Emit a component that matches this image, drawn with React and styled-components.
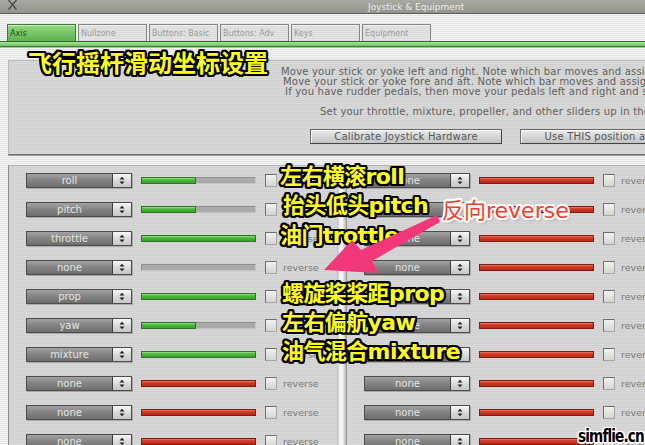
import React from "react";
import styled, { createGlobalStyle, css } from "styled-components";

const GlobalStyle = createGlobalStyle`
  html, body {
    margin: 0;
    padding: 0;
    overflow: hidden;
  }
  body {
    font-family: "DejaVu Sans", "Liberation Sans", sans-serif;
  }
`;

const Screen = styled.div`
  position: relative;
  width: 645px;
  height: 445px;
  overflow: hidden;
  background: repeating-linear-gradient(to bottom, #f4f4f4 0 1px, #e4e4e4 1px 2px);
`;

const TitleBar = styled.div`
  height: 13px;
  display: flex;
  align-items: center;
  background: linear-gradient(#aaaaa4, #93938d);
  border-bottom: 1px solid #5c5c58;
`;

const CloseMark = styled.svg`
  margin-left: 8px;
  width: 9px;
  height: 10px;
  align-self: flex-start;
`;

const Title = styled.span`
  margin-left: 351px;
  font-size: 9px;
  color: #ececea;
`;

const TabStrip = styled.div`
  display: flex;
  gap: 2px;
  margin: 10px 0 0 7px;
  height: 17px;
`;

const Tab = styled.div`
  width: 69px;
  height: 17px;
  box-sizing: border-box;
  padding: 4px 0 0 2px;
  font-size: 8px;
  line-height: 10px;
  white-space: nowrap;
  border: 1px solid #858585;
  border-bottom: none;
  ${(p) =>
    p.$active
      ? css`
          background: linear-gradient(#c9f0bf 0 1px, #8fd67f 1px, #5cb34c);
          border-color: #3f7a36;
          color: #1f4f1c;
        `
      : css`
          background: linear-gradient(#f6f6f6 0 1px, transparent 1px),
            repeating-linear-gradient(#e6e6e6 0 1px, #d9d9d9 1px 2px);
          color: #9c9c9c;
        `}
`;

const TabRule = styled.div`
  height: 6px;
  box-sizing: border-box;
  border-top: 1px solid #2f6a2a;
  border-bottom: 1px solid #3d7d34;
  background: linear-gradient(#a6e496, #6fc45f);
  box-shadow: 0 1px 0 #b5b5b5;
`;

const InfoPanel = styled.div`
  margin: 13px 0 0 8px;
  width: 800px;
  height: 95px;
  box-sizing: border-box;
  padding: 6px 0 0 272px;
  background: repeating-linear-gradient(#d9d9d9 0 1px, #d1d1d1 1px 2px);
  border: 1px solid #b9b9b9;
  border-bottom-color: #707070;
  box-shadow: 0 1px 0 #9a9a9a;
  color: #606060;
  font-size: 10px;
  letter-spacing: 0.2px;
`;

const InfoLine = styled.div`
  margin-left: ${(p) => p.$indent || 0}px;
  margin-top: ${(p) => p.$gap || 0}px;
  line-height: 10px;
  white-space: nowrap;
`;

const ButtonRow = styled.div`
  display: flex;
  gap: 18px;
  margin: 12px 0 0 29px;
`;

const PanelButton = styled.div`
  width: 192px;
  height: 15px;
  flex: none;
  box-sizing: border-box;
  border: 1px solid #6a6a6a;
  border-right-color: #444;
  border-bottom-color: #444;
  background: linear-gradient(#ececec, #d2d2d2 60%, #c4c4c4);
  box-shadow: inset 1px 1px 0 #f8f8f8;
  color: #555;
  font-size: 10px;
  line-height: 13px;
  text-align: center;
  white-space: nowrap;
`;

const AxisPanel = styled.div`
  display: flex;
  margin: 10px 0 0 8px;
  height: 300px;
`;

const AxisColumn = styled.div`
  display: flex;
  flex-direction: column;
  gap: 14px;
  box-sizing: border-box;
  padding: 7px 0 0 17px;
  width: ${(p) => (p.$wide ? "auto" : "329px")};
  flex: ${(p) => (p.$wide ? 1 : "none")};
  background: repeating-linear-gradient(#d8d8d8 0 1px, #d0d0d0 1px 2px);
  border-top: 1px solid #b0b0b0;
  border-left: 1px solid ${(p) => (p.$wide ? "#9a9a9a" : "#8c8c8c")};
`;

const Divider = styled.div`
  width: 9px;
  flex: none;
  background: linear-gradient(
    to right,
    #b8b8b8,
    #ececec 25%,
    #fafafa 50%,
    #e2e2e2 75%,
    #b0b0b0
  );
`;

const AxisRow = styled.div`
  display: flex;
  align-items: center;
  height: 15px;
`;

const Select = styled.div`
  display: flex;
  flex: none;
  width: 106px;
  height: 15px;
  box-sizing: border-box;
  border: 1px solid #4c4c4c;
  box-shadow: 1px 1px 0 rgba(0, 0, 0, 0.2);
`;

const SelectValue = styled.div`
  flex: 1;
  background: linear-gradient(#a2a2a2, #858585 45%, #6e6e6e);
  border-right: 1px solid #404040;
  color: #e4e4e4;
  font-size: 10px;
  line-height: 13px;
  text-align: center;
`;

const SelectArrow = styled.div`
  width: 18px;
  display: flex;
  align-items: center;
  justify-content: center;
  background: linear-gradient(#f6f6f6, #d6d6d6 60%, #c6c6c6);
`;

const Track = styled.div`
  display: flex;
  flex: none;
  margin-left: 9px;
  width: 115px;
  height: 7px;
  box-sizing: border-box;
  background: #aaaaaa;
  border: 1px solid #8e8e8e;
  border-bottom-color: #c4c4c4;
  border-right-color: #c4c4c4;
`;

const Fill = styled.div`
  height: 100%;
  ${(p) =>
    p.$tone === "red"
      ? css`
          background: linear-gradient(#f07a64, #d33a27 35%, #b82a19);
          box-shadow: 0 0 0 1px #7e1c10;
        `
      : css`
          background: linear-gradient(#9ae68a, #4dba3d 35%, #3c9f2e);
          box-shadow: 0 0 0 1px #2c7423;
        `}
`;

const CheckBox = styled.div`
  flex: none;
  margin-left: 9px;
  width: 12px;
  height: 13px;
  box-sizing: border-box;
  border: 1px solid #6e6e6e;
  border-right-color: #a6a6a6;
  border-bottom-color: #a6a6a6;
  background: linear-gradient(#f2f2f2, #d4d4d4);
`;

const CheckLabel = styled.span`
  margin-left: 6px;
  font-size: 9.5px;
  color: #7a7a7a;
  white-space: nowrap;
`;

const outline = (c, w) => {
  const s = [];
  for (let a = 0; a < 16; a++) {
    const t = (a / 16) * Math.PI * 2;
    s.push(`${(Math.cos(t) * w).toFixed(2)}px ${(Math.sin(t) * w).toFixed(2)}px 0 ${c}`);
  }
  return s.join(", ");
};

const Callout = styled.div`
  position: absolute;
  left: ${(p) => p.$x}px;
  top: ${(p) => p.$y}px;
  font-family: "DejaVu Sans", "Noto Sans CJK SC", sans-serif;
  font-size: ${(p) => p.$size || 22}px;
  line-height: 1;
  white-space: nowrap;
  ${(p) =>
    p.$tone === "red"
      ? css`
          font-weight: 400;
          color: #ff3a2c;
          text-shadow: ${outline("#fff", 2)}, 2px 2px 3px rgba(0, 0, 0, 0.35);
        `
      : css`
          font-weight: 700;
          letter-spacing: ${p.$size ? 0 : -0.6}px;
          color: #ffff14;
          text-shadow: ${outline("#000", 2.2)};
        `}
`;

const Watermark = styled.div`
  position: absolute;
  left: 578px;
  top: 427px;
  font-family: "DejaVu Sans Condensed", "DejaVu Sans", sans-serif;
  font-weight: 700;
  font-size: 18px;
  line-height: 1;
  letter-spacing: -1px;
  color: #000;
  transform: scaleX(0.84);
  transform-origin: left top;
  text-shadow: ${outline("#fff", 1.5)};
`;

const ArrowLayer = styled.svg`
  position: absolute;
  left: 0;
  top: 0;
  width: 645px;
  height: 445px;
  pointer-events: none;
`;

const tabs = ["Axis", "Nullzone", "Buttons: Basic", "Buttons: Adv", "Keys", "Equipment"];

const leftAxes = [
  { name: "roll", fill: 0.47, tone: "green" },
  { name: "pitch", fill: 0.47, tone: "green" },
  { name: "throttle", fill: 1, tone: "green" },
  { name: "none", fill: 0, tone: "green" },
  { name: "prop", fill: 1, tone: "green" },
  { name: "yaw", fill: 0.47, tone: "green" },
  { name: "mixture", fill: 1, tone: "green" },
  { name: "none", fill: 1, tone: "red" },
  { name: "none", fill: 1, tone: "red" },
  { name: "none", fill: 1, tone: "red" },
];

const rightAxes = Array.from({ length: 10 }, () => ({ name: "none", fill: 1, tone: "red" }));

const UpDown = () => (
  <svg width="6" height="9" viewBox="0 0 6 9">
    <path d="M0.5 3.5 L3 0.8 L5.5 3.5 Z M0.5 5.5 L3 8.2 L5.5 5.5 Z" fill="#222" />
  </svg>
);

const AxisLine = ({ axis }) => (
  <AxisRow>
    <Select>
      <SelectValue>{axis.name}</SelectValue>
      <SelectArrow>
        <UpDown />
      </SelectArrow>
    </Select>
    <Track>
      {axis.fill > 0 && <Fill $tone={axis.tone} style={{ width: `${axis.fill * 100}%` }} />}
    </Track>
    <CheckBox />
    <CheckLabel>reverse</CheckLabel>
  </AxisRow>
);

export default function App() {
  return (
    <Screen>
      <GlobalStyle />
      <TitleBar>
        <CloseMark viewBox="0 0 9 10">
          <path d="M0.5 0 L8.5 9.5 M8.5 0 L0.5 9.5" stroke="#4a4a48" strokeWidth="1.4" />
        </CloseMark>
        <Title>Joystick &amp; Equipment</Title>
      </TitleBar>

      <TabStrip>
        {tabs.map((t, i) => (
          <Tab key={t} $active={i === 0}>
            {t}
          </Tab>
        ))}
      </TabStrip>
      <TabRule />

      <InfoPanel>
        <InfoLine>Move your stick or yoke left and right. Note which bar moves and assign it to 'roll'.</InfoLine>
        <InfoLine $indent={2}>Move your stick or yoke fore and aft. Note which bar moves and assign it to 'pitch'.</InfoLine>
        <InfoLine $indent={4}>If you have rudder pedals, then move your pedals left and right and set that bar to 'yaw'.</InfoLine>
        <InfoLine $indent={39} $gap={10}>
          Set your throttle, mixture, propeller, and other sliders up in the same way.
        </InfoLine>
        <ButtonRow>
          <PanelButton>Calibrate Joystick Hardware</PanelButton>
          <PanelButton>Use THIS position as center</PanelButton>
        </ButtonRow>
      </InfoPanel>

      <AxisPanel>
        <AxisColumn>
          {leftAxes.map((a, i) => (
            <AxisLine key={i} axis={a} />
          ))}
        </AxisColumn>
        <Divider />
        <AxisColumn $wide>
          {rightAxes.map((a, i) => (
            <AxisLine key={i} axis={a} />
          ))}
        </AxisColumn>
      </AxisPanel>

      <Callout $x={28} $y={52} $size={24}>飞行摇杆滑动坐标设置</Callout>
      <Callout $x={280} $y={166}>左右横滚roll</Callout>
      <Callout $x={283} $y={195}>抬头低头pitch</Callout>
      <Callout $x={280} $y={225}>油门trottle</Callout>
      <Callout $x={282} $y={283}>螺旋桨桨距prop</Callout>
      <Callout $x={282} $y={312}>左右偏航yaw</Callout>
      <Callout $x={282} $y={341}>油气混合mixture</Callout>
      <Callout $x={442} $y={200} $tone="red">反向reverse</Callout>

      <ArrowLayer viewBox="0 0 645 445">
        <path
          d="M324 270 L352 240 L361 250 L437 215 L440 222 L372 261 L378 273 Z"
          fill="#f2387a"
        />
      </ArrowLayer>

      <Watermark>simflie.cn</Watermark>
    </Screen>
  );
}
